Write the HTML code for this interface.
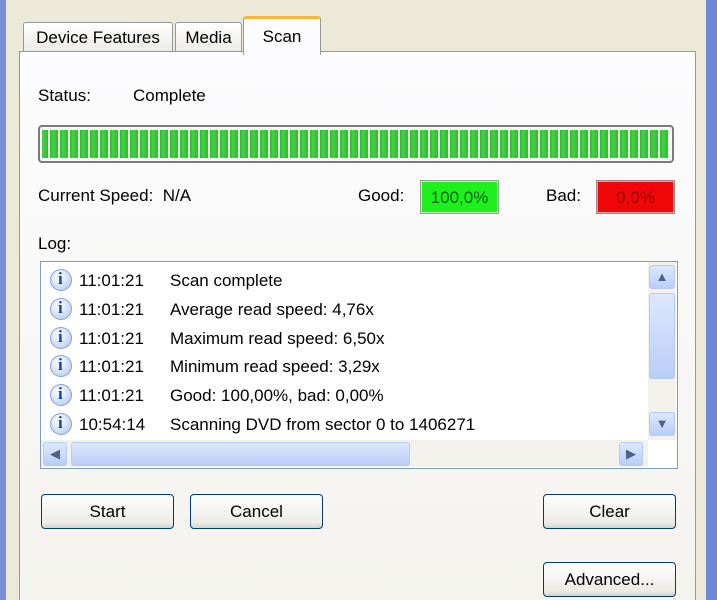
<!DOCTYPE html>
<html style="overflow:hidden;height:600px"><head><style>
body{margin:0;width:717px;height:600px;background:#ECE9D8;position:relative;overflow:hidden;font-family:"Liberation Sans",Tahoma,sans-serif;font-size:17px;color:#000}
.a{position:absolute}
.lstripe{left:0;top:0;width:6px;height:600px;background:#7A8FD8}
.rstripe{left:706px;top:0;width:11px;height:600px;background:#6F86D6}
.panel{left:19px;top:51px;width:675px;height:560px;border:1px solid #919B9C;background:linear-gradient(#FCFCFE,#F4F3EE)}
.tab{top:22px;height:28px;border:1px solid #919B9C;border-bottom:none;border-radius:3px 3px 0 0;background:linear-gradient(#fff,#ECEBE6);text-align:center;line-height:30px}
.btn{width:131px;height:33px;border:1px solid #003C74;border-radius:4px;background:linear-gradient(#fff,#ECEBE6 85%,#D6D0C5);text-align:center;line-height:34px}
.row{left:48px;height:28px;line-height:30px;white-space:nowrap}
.row .t{position:absolute;left:31px}
.row .m{position:absolute;left:122px}
.ic{position:absolute;left:2px;top:3px;width:22px;height:22px;border-radius:50%;background:radial-gradient(circle at 40% 35%,#fff,#BFD4F2 70%,#7E9CC9);box-shadow:inset 0 0 0 1px #8AA5CF}
.ic:after{content:"i";position:absolute;left:8px;top:1px;line-height:18px;font:bold 17px/18px "Liberation Serif",serif;color:#1F3F8F}
.sbtn{background:linear-gradient(#DDE8FD,#B9CDF7);border:1px solid #B7CBF5;border-radius:3px}
</style></head><body>
<div class="a lstripe"></div><div class="a rstripe"></div>
<div class="a panel"></div>
<div class="a tab" style="left:23px;width:148px">Device Features</div>
<div class="a tab" style="left:175px;width:65px">Media</div>
<div class="a tab" style="left:243px;top:16px;width:76px;height:36px;background:#FCFCFE;border-top:3px solid #F5B83C;line-height:36px;z-index:2">Scan</div>
<div class="a" style="left:38px;top:86px">Status:</div>
<div class="a" style="left:133px;top:86px">Complete</div>
<div class="a" style="left:38px;top:125px;width:636px;height:38px;border:2px solid #7B7B7B;border-radius:4px;background:repeating-linear-gradient(90deg,#2DBB2D 0,#45D145 3px,#2DBB2D 8px,#E8F8E8 8px,#E8F8E8 10px);background-clip:content-box;padding:3px 2px;box-sizing:border-box"></div>
<div class="a" style="left:38px;top:186px">Current Speed:&nbsp; N/A</div>
<div class="a" style="left:358px;top:186px">Good:</div>
<div class="a" style="left:420px;top:180px;width:77px;height:32px;border:1px solid #8EA68E;background:#1EF01E;box-shadow:inset 0 0 0 1px #C8E8C8;text-align:center;line-height:34px;color:#006000">100,0%</div>
<div class="a" style="left:546px;top:186px">Bad:</div>
<div class="a" style="left:596px;top:180px;width:77px;height:32px;border:1px solid #A08888;background:#F00808;box-shadow:inset 0 0 0 1px #D8A0A0;text-align:center;line-height:34px;color:#A00000">0,0%</div>
<div class="a" style="left:38px;top:234px">Log:</div>
<div class="a" style="left:40px;top:261px;width:636px;height:206px;border:1px solid #7F9DB9;background:#fff"></div>
<div class="a row" style="top:266px"><span class="ic"></span><span class="t">11:01:21</span><span class="m">Scan complete</span></div>
<div class="a row" style="top:295px"><span class="ic"></span><span class="t">11:01:21</span><span class="m">Average read speed: 4,76x</span></div>
<div class="a row" style="top:324px"><span class="ic"></span><span class="t">11:01:21</span><span class="m">Maximum read speed: 6,50x</span></div>
<div class="a row" style="top:352px"><span class="ic"></span><span class="t">11:01:21</span><span class="m">Minimum read speed: 3,29x</span></div>
<div class="a row" style="top:381px"><span class="ic"></span><span class="t">11:01:21</span><span class="m">Good: 100,00%, bad: 0,00%</span></div>
<div class="a row" style="top:410px"><span class="ic"></span><span class="t">10:54:14</span><span class="m">Scanning DVD from sector 0 to 1406271</span></div>
<div class="a" style="left:648px;top:262px;width:28px;height:178px;background:#F3F1EC"></div>
<div class="a sbtn" style="left:649px;top:265px;width:24px;height:22px;text-align:center;line-height:22px;color:#4D6185;font-size:13px">&#9650;</div>
<div class="a sbtn" style="left:649px;top:293px;width:24px;height:84px"></div>
<div class="a sbtn" style="left:649px;top:412px;width:24px;height:22px;text-align:center;line-height:22px;color:#4D6185;font-size:13px">&#9660;</div>
<div class="a" style="left:41px;top:440px;width:607px;height:27px;background:#F3F1EC"></div>
<div class="a sbtn" style="left:43px;top:442px;width:22px;height:22px;text-align:center;line-height:22px;color:#4D6185;font-size:13px">&#9664;</div>
<div class="a sbtn" style="left:71px;top:442px;width:337px;height:22px"></div>
<div class="a sbtn" style="left:619px;top:442px;width:22px;height:22px;text-align:center;line-height:22px;color:#4D6185;font-size:13px">&#9654;</div>
<div class="a btn" style="left:41px;top:494px">Start</div>
<div class="a btn" style="left:190px;top:494px">Cancel</div>
<div class="a btn" style="left:543px;top:494px">Clear</div>
<div class="a btn" style="left:543px;top:562px">Advanced...</div>
</body></html>
